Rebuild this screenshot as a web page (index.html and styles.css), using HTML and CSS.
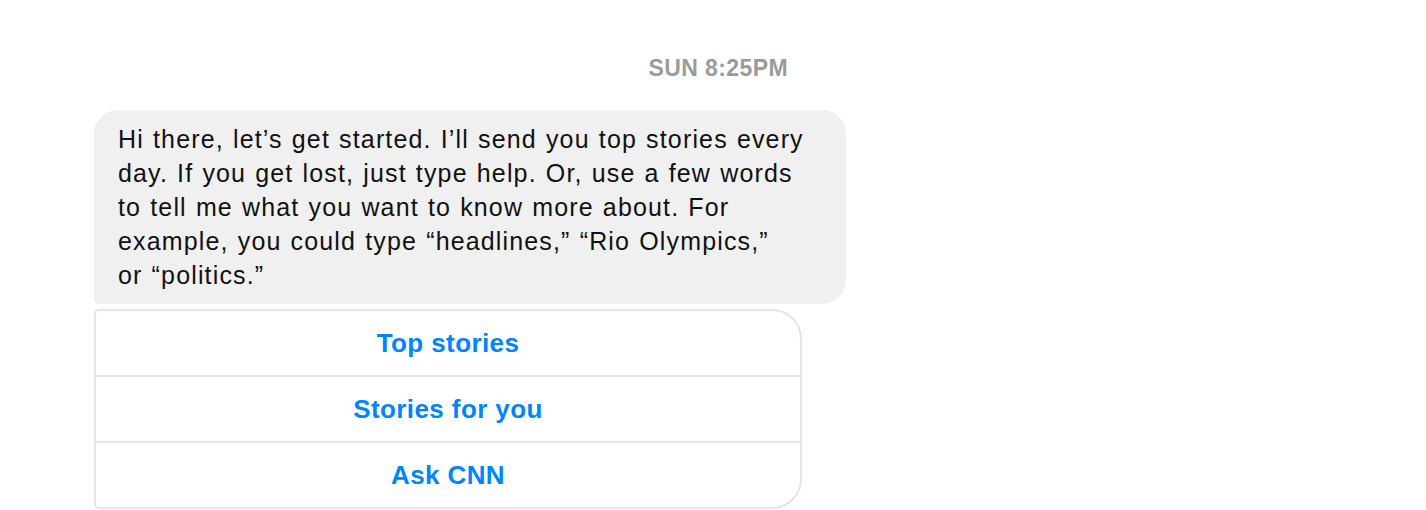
FILE: index.html
```html
<!DOCTYPE html>
<html>
<head>
<meta charset="utf-8">
<link rel="stylesheet" href="styles.css">
</head>
<body>
<div class="thread">
  <div class="timestamp">SUN 8:25PM</div>
  <div class="bubble">Hi there, let’s get started. I’ll send you top stories every<br>day. If you get lost, just type help. Or, use a few words<br>to tell me what you want to know more about. For<br>example, you could type “headlines,” “Rio Olympics,”<br>or “politics.”</div>
  <div class="buttons">
    <div class="btn">Top stories</div>
    <div class="btn">Stories for you</div>
    <div class="btn">Ask CNN</div>
  </div>
</div>
</body>
</html>
```
FILE: styles.css
```css
html, body {
  margin: 0;
  padding: 0;
  background: #ffffff;
}
body {
  font-family: "Liberation Sans", Arial, sans-serif;
}
.thread {
  display: flex;
  flex-direction: column;
  align-items: flex-start;
  padding: 54px 0 0 94px;
  width: 752px;
}
.timestamp {
  align-self: stretch;
  text-align: right;
  padding-right: 58px;
  font-size: 23px;
  font-weight: bold;
  letter-spacing: 0.4px;
  color: #9b9b9b;
  line-height: 28px;
  height: 28px;
}
.bubble {
  margin-top: 28px;
  box-sizing: border-box;
  width: 752px;
  background: #f0f0f0;
  border-radius: 24px 24px 24px 5px;
  padding: 12px 24px 12px 24px;
  font-size: 25px;
  letter-spacing: 1.15px;
  word-spacing: 1px;
  line-height: 34px;
  color: #111111;
  white-space: nowrap;
}
.buttons {
  margin-top: 5px;
  box-sizing: border-box;
  width: 708px;
  border: 2px solid #e5e5e5;
  border-radius: 5px 30px 30px 5px;
  display: flex;
  flex-direction: column;
}
.btn {
  height: 64px;
  display: flex;
  align-items: center;
  justify-content: center;
  font-size: 26px;
  font-weight: bold;
  letter-spacing: 0.4px;
  color: #0084ff;
}
.btn + .btn {
  border-top: 2px solid #e5e5e5;
}
```
